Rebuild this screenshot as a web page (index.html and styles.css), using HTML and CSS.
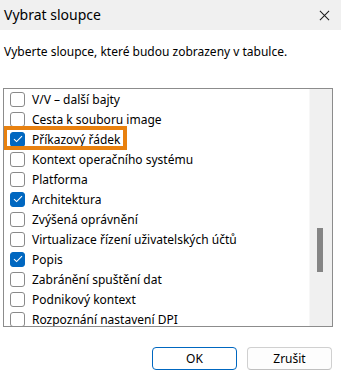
FILE: index.html
```html
<!DOCTYPE html>
<html lang="cs">
<head>
<meta charset="utf-8">
<title>Vybrat sloupce</title>
<link rel="stylesheet" href="styles.css">
</head>
<body>
<div class="dialog">
  <div class="titlebar">
    <span class="title">Vybrat sloupce</span>
    <span class="close">
      <svg width="12" height="12" viewBox="0 0 12 12"><path d="M1 1 L11 11 M11 1 L1 11" stroke="#1a1a1a" stroke-width="1.1" fill="none"/></svg>
    </span>
  </div>
  <p class="intro">Vyberte sloupce, které budou zobrazeny v tabulce.</p>
  <div class="list">
    <div class="items">
      <div class="row"><span class="cb"></span><span class="label">V/V – další bajty</span></div>
      <div class="row"><span class="cb"></span><span class="label">Cesta k souboru image</span></div>
      <div class="row hl"><span class="cb on"><svg width="10" height="8" viewBox="0 0 10 8"><path d="M1 4.2 L3.6 6.6 L9 1.2" stroke="#fff" stroke-width="1.1" fill="none"/></svg></span><span class="label">Příkazový řádek</span><span class="mark"></span></div>
      <div class="row"><span class="cb"></span><span class="label">Kontext operačního systému</span></div>
      <div class="row"><span class="cb"></span><span class="label">Platforma</span></div>
      <div class="row"><span class="cb on"><svg width="10" height="8" viewBox="0 0 10 8"><path d="M1 4.2 L3.6 6.6 L9 1.2" stroke="#fff" stroke-width="1.1" fill="none"/></svg></span><span class="label">Architektura</span></div>
      <div class="row"><span class="cb"></span><span class="label">Zvýšená oprávnění</span></div>
      <div class="row"><span class="cb"></span><span class="label">Virtualizace řízení uživatelských účtů</span></div>
      <div class="row"><span class="cb on"><svg width="10" height="8" viewBox="0 0 10 8"><path d="M1 4.2 L3.6 6.6 L9 1.2" stroke="#fff" stroke-width="1.1" fill="none"/></svg></span><span class="label">Popis</span></div>
      <div class="row"><span class="cb"></span><span class="label">Zabránění spuštění dat</span></div>
      <div class="row"><span class="cb"></span><span class="label">Podnikový kontext</span></div>
      <div class="row"><span class="cb"></span><span class="label">Rozpoznání nastavení DPI</span></div>
    </div>
    <div class="scrollbar"><div class="thumb"></div></div>
  </div>
  <div class="buttons">
    <button class="btn primary">OK</button>
    <button class="btn">Zrušit</button>
  </div>
</div>
</body>
</html>
```
FILE: styles.css
```css
html, body {
  margin: 0;
  padding: 0;
  background: #ffffff;
}
body {
  font-family: "Noto Sans", "Open Sans", sans-serif;
  color: #000;
}
.dialog {
  width: 341px;
  height: 380px;
  overflow: hidden;
  background: #fff;
}
.titlebar {
  height: 30px;
  background: #f0f0f0;
  display: flex;
  align-items: center;
  justify-content: space-between;
  padding: 0 11px 0 4px;
}
.title {
  font-size: 14px;
  line-height: 1;
  padding-bottom: 1px;
}
.close {
  display: flex;
  width: 11px;
  height: 11px;
}
.close svg {
  width: 11px;
  height: 11px;
}
.intro {
  margin: 0;
  padding: 13px 0 0 4px;
  height: 58px;
  box-sizing: border-box;
  font-size: 12px;
  line-height: 18px;
}
.list {
  margin-left: 3px;
  width: 330px;
  height: 239px;
  box-sizing: border-box;
  border: 1px solid #8c8c8c;
  display: flex;
  overflow: hidden;
}
.items {
  flex: 1;
  overflow: hidden;
}
.row {
  position: relative;
  height: 20px;
  display: flex;
  align-items: center;
  padding-left: 6px;
  font-size: 12px;
  white-space: nowrap;
}
.cb {
  width: 15px;
  height: 15px;
  box-sizing: border-box;
  border: 1px solid #8a8a8a;
  border-radius: 3px;
  background: #fff;
  display: flex;
  align-items: center;
  justify-content: center;
  flex: none;
}
.cb.on {
  background: #0067c0;
  border-color: #0067c0;
}
.label {
  margin-left: 7px;
}
.mark {
  position: absolute;
  left: -1px;
  top: -3px;
  width: 124px;
  height: 24px;
  box-sizing: border-box;
  border: 4px solid #e8810f;
}
.scrollbar {
  width: 22px;
  background: #f0f0f0;
  border-left: 1px solid #f7f7f7;
  position: relative;
}
.thumb {
  margin: 139px 0 0 7px;
  width: 6px;
  height: 44px;
  background: #858585;
}
.buttons {
  display: flex;
  justify-content: flex-end;
  gap: 10px;
  padding: 20px 9px 0 0;
}
.btn {
  width: 85px;
  height: 23px;
  border: 1px solid #d0d0d0;
  border-bottom-color: #c0c0c0;
  border-radius: 4px;
  background: #fdfdfd;
  font-family: "Noto Sans", "Open Sans", sans-serif;
  font-size: 12px;
  color: #000;
  padding: 0;
}
.btn.primary {
  border: 1px solid #0067c0;
  background: #fff;
}
```
